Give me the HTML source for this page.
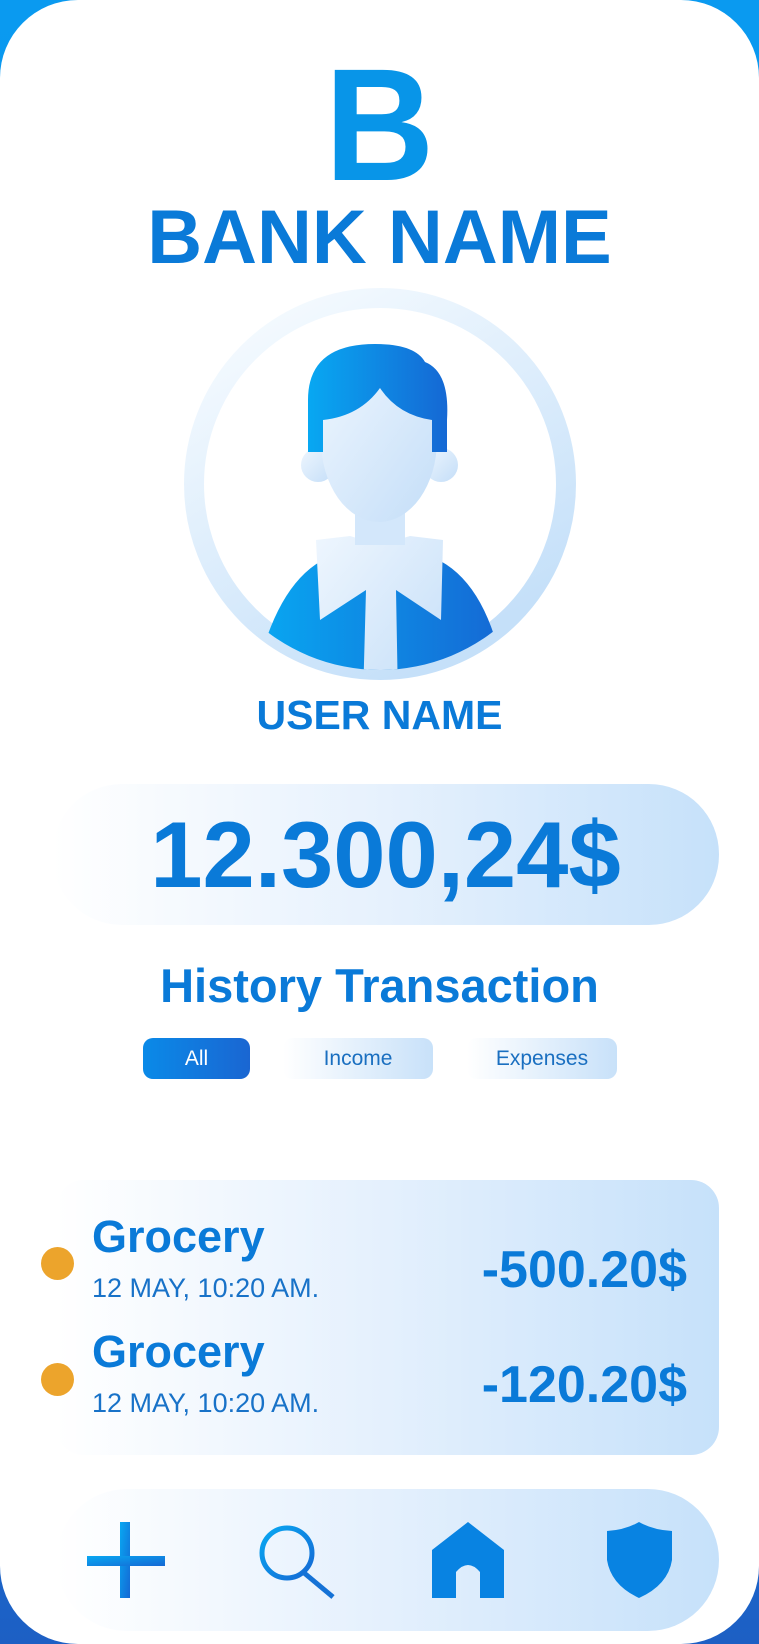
<!DOCTYPE html>
<html><head><meta charset="utf-8"><style>
*{margin:0;padding:0;box-sizing:border-box}
body{width:759px;height:1644px;position:relative;overflow:hidden;background:linear-gradient(180deg,#0a9af0 0%,#0a8ae8 60%,#1d5fc4 100%);font-family:"Liberation Sans",sans-serif;color:#0a7ad8}
.page{position:absolute;left:0;top:0;width:759px;height:1644px;background:#fff;border-radius:78px}
.abs{position:absolute}
.c{text-align:center;white-space:nowrap}
</style></head><body>
<div class="page"></div>
<div class="abs c" style="left:0;width:759px;top:45px;font-size:160px;font-weight:bold;line-height:160px;color:#0895e8;transform:scaleX(0.95)">B</div>
<div class="abs c" style="left:0;width:759px;top:193px;font-size:76px;font-weight:bold;line-height:90px;color:#0a7ad8">BANK NAME</div>
<svg class="abs" style="left:170px;top:280px" width="420" height="420" viewBox="170 280 420 420">
<defs>
<linearGradient id="ring" x1="0" y1="0" x2="0.6" y2="1"><stop offset="0" stop-color="#fafdff"/><stop offset="1" stop-color="#c5e0f9"/></linearGradient>
<linearGradient id="blue" x1="0" y1="0" x2="1" y2="0"><stop offset="0" stop-color="#08a8f2"/><stop offset="1" stop-color="#1568d4"/></linearGradient>
<linearGradient id="face" x1="0" y1="0" x2="1" y2="1"><stop offset="0" stop-color="#eef6fe"/><stop offset="1" stop-color="#c4def8"/></linearGradient>
<clipPath id="cc"><circle cx="380" cy="484" r="186"/></clipPath>
</defs>
<circle cx="380" cy="484" r="186" fill="none" stroke="url(#ring)" stroke-width="20"/>
<g clip-path="url(#cc)">
<path d="M255 680 Q280 565 345 552 L415 552 Q485 565 505 680 Z" fill="url(#blue)"/>
<path d="M316 540 L350 536 L380 545 L410 536 L443 540 L441 620 L396 590 L398 700 L363 700 L366 590 L320 620 Z" fill="url(#face)"/>
</g>
<path d="M355 500 L405 500 L405 545 L355 545 Z" fill="#d3e7fb"/>
<circle cx="318" cy="465" r="17" fill="url(#face)"/>
<circle cx="441" cy="465" r="17" fill="url(#face)"/>
<ellipse cx="379" cy="440" rx="58" ry="82" fill="url(#face)"/>
<path d="M308 452 L308 400 Q308 344 375 344 Q415 344 425 362 Q450 372 447 420 L447 452 L432 452 L432 420 Q398 415 380 388 Q360 416 323 420 L323 452 Z" fill="url(#blue)"/>
</svg>
<div class="abs c" style="left:0;width:759px;top:690px;font-size:41px;font-weight:bold;line-height:50px;color:#0a7ad8">USER NAME</div>
<div class="abs" style="left:52px;top:784px;width:667px;height:141px;border-radius:70px;background:linear-gradient(90deg,#fff 0%,#e6f1fd 50%,#c6e1fa 100%)"></div>
<div class="abs c" style="left:52px;width:667px;top:800px;font-size:94px;font-weight:bold;line-height:110px;color:#0a7ad8">12.300,24$</div>
<div class="abs c" style="left:0;width:759px;top:958px;font-size:47px;font-weight:bold;line-height:56px;color:#0a7ad8">History Transaction</div>
<div class="abs c" style="left:143px;top:1038px;width:107px;height:41px;border-radius:10px;background:linear-gradient(90deg,#0a8ae8,#1a66d2);color:#fff;font-size:21px;line-height:41px">All</div>
<div class="abs c" style="left:283px;top:1038px;width:150px;height:41px;border-radius:10px;background:linear-gradient(90deg,#fff,#c8e1f9);color:#1a6fc0;font-size:21px;line-height:41px">Income</div>
<div class="abs c" style="left:467px;top:1038px;width:150px;height:41px;border-radius:10px;background:linear-gradient(90deg,#fff,#c8e1f9);color:#1a6fc0;font-size:21px;line-height:41px">Expenses</div>
<div class="abs" style="left:56px;top:1180px;width:663px;height:275px;border-radius:28px;background:linear-gradient(90deg,#fff 0%,#e4f0fd 50%,#c6e1fa 100%)"></div>
<div class="abs" style="left:41px;top:1247px;width:33px;height:33px;border-radius:50%;background:#eca42c"></div>
<div class="abs" style="left:41px;top:1363px;width:33px;height:33px;border-radius:50%;background:#eca42c"></div>
<div class="abs" style="left:92px;top:1209px;font-size:45px;font-weight:bold;line-height:56px;white-space:nowrap">Grocery</div>
<div class="abs" style="left:92px;top:1272px;font-size:27px;line-height:32px;white-space:nowrap;color:#1872c8">12 MAY, 10:20 AM.</div>
<div class="abs" style="left:92px;top:1324px;font-size:45px;font-weight:bold;line-height:56px;white-space:nowrap">Grocery</div>
<div class="abs" style="left:92px;top:1387px;font-size:27px;line-height:32px;white-space:nowrap;color:#1872c8">12 MAY, 10:20 AM.</div>
<div class="abs" style="right:72px;top:1238px;font-size:52px;font-weight:bold;line-height:64px;white-space:nowrap">-500.20$</div>
<div class="abs" style="right:72px;top:1353px;font-size:52px;font-weight:bold;line-height:64px;white-space:nowrap">-120.20$</div>
<div class="abs" style="left:56px;top:1489px;width:663px;height:142px;border-radius:71px;background:linear-gradient(90deg,#fff 0%,#e4f0fd 50%,#c6e1fa 100%)"></div>
<svg class="abs" style="left:0;top:1500px" width="759" height="120" viewBox="0 1500 759 120">
<defs><linearGradient id="b2" x1="0" y1="0" x2="1" y2="1"><stop offset="0" stop-color="#08a8f2"/><stop offset="1" stop-color="#1568d4"/></linearGradient></defs>
<rect x="120" y="1522" width="10" height="76" fill="url(#b2)"/>
<rect x="87" y="1556" width="78" height="10" fill="url(#b2)"/>
<circle cx="287" cy="1553" r="25" fill="none" stroke="url(#b2)" stroke-width="5"/>
<line x1="303" y1="1572" x2="333" y2="1597" stroke="#1572d6" stroke-width="5"/>
<path d="M432 1550 L468 1522 L504 1550 L504 1598 L480 1598 L480 1572 Q468 1558 456 1572 L456 1598 L432 1598 Z" fill="#0883e2"/>
<path d="M607 1531 Q625 1530 639 1522 Q653 1530 672 1531 L672 1560 Q668 1585 639 1598 Q611 1585 607 1560 Z" fill="#0883e2"/>
</svg>
</body></html>
